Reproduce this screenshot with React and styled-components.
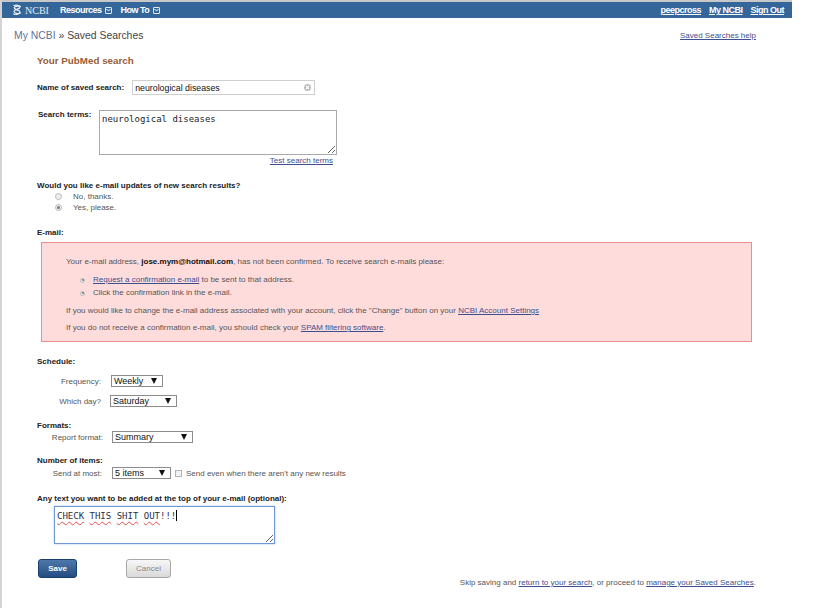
import React from 'react'
import styled, { createGlobalStyle } from 'styled-components'

const GlobalStyle = createGlobalStyle`
  html, body {
    margin: 0;
    padding: 0;
    background: #fff;
  }
  body {
    font-family: "Liberation Sans", Arial, sans-serif;
    font-size: 8px;
    color: #444;
  }
`

const Frame = styled.div`
  width: 790px;
  min-height: 606px;
  border-left: 2px solid #d4d4d4;
  border-top: 2px solid #c8c8c8;
`

const Header = styled.div`
  height: 16px;
  background: #34669a;
  display: flex;
  align-items: center;
  padding: 0 8px 0 10px;
  color: #fff;
`

const Logo = styled.div`
  display: flex;
  align-items: center;
  gap: 3px;
  font-family: "Liberation Serif", "Times New Roman", serif;
  font-size: 10px;
  color: #e6edf5;
`

const NavMenu = styled.div`
  display: flex;
  align-items: center;
  margin-left: 11px;
  gap: 8px;
`

const NavItem = styled.span`
  display: inline-flex;
  align-items: center;
  gap: 4px;
  font-weight: bold;
  font-size: 9px;
  letter-spacing: -0.5px;
  color: #fff;
`

const DropBox = styled.span`
  width: 7px;
  height: 7px;
  box-sizing: border-box;
  border: 1px solid rgba(255, 255, 255, 0.85);
  border-radius: 1px;
  display: inline-flex;
  align-items: center;
  justify-content: center;
`

const UserLinks = styled.div`
  margin-left: auto;
  display: flex;
  gap: 8px;
`

const UserLink = styled.a`
  font-weight: bold;
  font-size: 9px;
  letter-spacing: -0.5px;
  color: #fff;
  text-decoration: underline;
`

const CrumbBar = styled.div`
  display: flex;
  align-items: center;
  justify-content: space-between;
  height: 10px;
  margin-top: 12px;
  padding: 0 36px 0 12px;
`

const Crumbs = styled.div`
  font-size: 10.4px;
  color: #444;
  span { color: #5f7199; }
`

const Link = styled.a`
  color: #3d4f8c;
  text-decoration: underline;
  font-size: ${p => p.$size || 8}px;
`

const Form = styled.div`
  padding: 0 36px 0 35px;
`

const SectionTitle = styled.div`
  margin-top: 15px;
  font-size: 9.8px;
  line-height: 12px;
  font-weight: bold;
  color: #985c36;
`

const Label = styled.div`
  font-size: 8px;
  line-height: 10px;
  font-weight: bold;
  color: #222;
  margin-top: ${p => p.$mt || 0}px;
`

const NameRow = styled.div`
  display: flex;
  align-items: center;
  margin-top: 13px;
  gap: 8px;
`

const InputWrap = styled.div`
  position: relative;
  width: 183px;
  height: 15px;
`

const TextInput = styled.input`
  width: 100%;
  height: 100%;
  box-sizing: border-box;
  border: 1px solid #cfcfcf;
  padding: 0 12px 0 2px;
  font-family: "Liberation Sans", Arial, sans-serif;
  font-size: 8.8px;
  color: #111;
  outline: none;
`

const ClearIcon = styled.span`
  position: absolute;
  right: 4px;
  top: 4px;
  width: 7px;
  height: 7px;
  border-radius: 50%;
  background: #bdbdbd;
  display: flex;
  align-items: center;
  justify-content: center;
`

const TermsRow = styled.div`
  display: flex;
  align-items: flex-start;
  margin-top: 15px;
`

const TermsLabel = styled(Label)`
  width: 61px;
  padding-left: 1px;
`

const TermsColumn = styled.div`
  display: flex;
  flex-direction: column;
  align-items: flex-end;
  gap: 1px;
  a { margin-right: 4px; line-height: 10px; }
`

const TermsArea = styled.textarea`
  width: 238px;
  height: 45px;
  box-sizing: border-box;
  border: 1px solid #a9a9a9;
  padding: 3px 2px;
  font-family: "DejaVu Sans Mono", "Liberation Mono", monospace;
  font-size: 9px;
  line-height: 11px;
  color: #222;
  outline: none;
  margin: 0;
`

const OptionList = styled.div`
  display: flex;
  flex-direction: column;
  padding-left: 18px;
`

const Option = styled.div`
  display: flex;
  align-items: center;
  height: 11px;
  gap: 11px;
  color: #555;
  font-size: 8px;
`

const Dot = styled.span`
  width: ${p => p.$size}px;
  height: ${p => p.$size}px;
  box-sizing: border-box;
  border-radius: 50%;
  border: 1px solid #b8b8b8;
  background: #eeeeee;
  display: inline-flex;
  align-items: center;
  justify-content: center;
  flex-shrink: 0;
  &::after {
    content: '';
    display: ${p => (p.$checked ? 'block' : 'none')};
    width: ${p => p.$inner}px;
    height: ${p => p.$inner}px;
    border-radius: 50%;
    background: #7a7a7a;
  }
`

const Notice = styled.div`
  margin: 4px 0 0 4px;
  width: 711px;
  height: 100px;
  box-sizing: border-box;
  background: #ffdcdc;
  border: 1px solid #f08c8c;
  padding: 14px 24px 0;
  color: #555;
  font-size: 8px;
  line-height: 10px;
`

const NoticeLine = styled.div`
  margin-top: ${p => p.$mt || 0}px;
  b { font-size: 8px; color: #111; }
`

const BulletList = styled.div`
  display: flex;
  flex-direction: column;
  gap: 3px;
  margin-top: 8px;
  padding-left: 14px;
`

const BulletItem = styled.div`
  display: flex;
  align-items: center;
  gap: 8px;
`

const FieldRow = styled.div`
  display: flex;
  align-items: center;
  height: 12px;
  margin-top: ${p => p.$mt || 0}px;
`

const FieldLabel = styled.div`
  width: ${p => p.$w}px;
  margin-right: ${p => p.$gap}px;
  text-align: right;
  color: #555;
  font-size: 8px;
`

const Select = styled.div`
  display: inline-flex;
  align-items: center;
  justify-content: space-between;
  width: ${p => p.$w}px;
  height: 12px;
  box-sizing: border-box;
  border: 1px solid #8c8c8c;
  background: #fff;
  padding: 0 5px 0 2px;
  font-size: 9px;
  color: #111;
`

const Arrow = styled.span`
  width: 0;
  height: 0;
  border-left: 3.5px solid transparent;
  border-right: 3.5px solid transparent;
  border-top: 6px solid #111;
`

const CheckBox = styled.span`
  width: 7px;
  height: 7px;
  box-sizing: border-box;
  border: 1px solid #b3b3b3;
  background: #f2f2f2;
  margin: 0 4px;
`

const CheckLabel = styled.span`
  color: #555;
  font-size: 8px;
`

const MessageBox = styled.div`
  margin: 2px 0 0 17px;
  width: 221px;
  height: 38px;
  box-sizing: border-box;
  border: 1px solid #6f98db;
  box-shadow: 0 0 2px #a9c3ef;
  padding: 3px 2px;
  font-family: "DejaVu Sans Mono", "Liberation Mono", monospace;
  font-size: 9px;
  line-height: 11px;
  color: #27304a;
  overflow: auto;
  resize: both;
`

const Misspelled = styled.span`
  text-decoration: underline wavy #e8504a;
  text-decoration-thickness: 1px;
  text-underline-offset: 2px;
`

const Caret = styled.span`
  display: inline-block;
  width: 1px;
  height: 11px;
  background: #000;
  vertical-align: -2px;
`

const BottomRow = styled.div`
  display: flex;
  align-items: flex-start;
  justify-content: space-between;
  margin-top: 15px;
`

const Buttons = styled.div`
  display: flex;
  gap: 49px;
  padding-left: 1px;
`

const Button = styled.button`
  height: 19px;
  width: ${p => p.$w}px;
  box-sizing: border-box;
  border-radius: 3px;
  font-family: "Liberation Sans", Arial, sans-serif;
  font-size: 8px;
  padding: 0;
  cursor: pointer;
  border: 1px solid ${p => (p.$primary ? '#173f6d' : '#a8a8a8')};
  color: ${p => (p.$primary ? '#fff' : '#8a8a8a')};
  font-weight: ${p => (p.$primary ? 'bold' : 'normal')};
  background: ${p => (p.$primary
    ? 'linear-gradient(#4f78aa, #234d82)'
    : 'linear-gradient(#f7f7f7, #d9d9d9)')};
`

const Footer = styled.div`
  margin-top: 19px;
  font-size: 8px;
  line-height: 10px;
  color: #555;
`

function Helix() {
  return (
    <svg width="10" height="12" viewBox="0 0 10 12" fill="none" stroke="#e6edf5" strokeWidth="1.2" strokeLinecap="round">
      <path d="M2 1.5 C5 0.5 9 2 7.5 4 C6 5.5 2 5.5 2 7.5 C2 9.5 6 10 8.5 9" />
      <path d="M8.5 2.5 C6 1.5 1 2.5 2.5 4.5 C4 6 8 6 8 8 C8 10 4 11 1.5 10" />
    </svg>
  )
}

function Chevron() {
  return (
    <svg width="5" height="4" viewBox="0 0 5 4" fill="none" stroke="#fff" strokeWidth="1">
      <path d="M0.5 1 L2.5 3 L4.5 1" />
    </svg>
  )
}

export default function App() {
  return (
    <>
      <GlobalStyle />
      <Frame>
        <Header>
          <Logo>
            <Helix />
            NCBI
          </Logo>
          <NavMenu>
            <NavItem>Resources <DropBox><Chevron /></DropBox></NavItem>
            <NavItem>How To <DropBox><Chevron /></DropBox></NavItem>
          </NavMenu>
          <UserLinks>
            <UserLink>peepcross</UserLink>
            <UserLink>My NCBI</UserLink>
            <UserLink>Sign Out</UserLink>
          </UserLinks>
        </Header>

        <CrumbBar>
          <Crumbs><span>My NCBI</span> » Saved Searches</Crumbs>
          <Link>Saved Searches help</Link>
        </CrumbBar>

        <Form>
          <SectionTitle>Your PubMed search</SectionTitle>

          <NameRow>
            <Label>Name of saved search:</Label>
            <InputWrap>
              <TextInput defaultValue="neurological diseases" />
              <ClearIcon>
                <svg width="5" height="5" viewBox="0 0 5 5" stroke="#fff" strokeWidth="1.1">
                  <path d="M1 1 L4 4 M4 1 L1 4" />
                </svg>
              </ClearIcon>
            </InputWrap>
          </NameRow>

          <TermsRow>
            <TermsLabel>Search terms:</TermsLabel>
            <TermsColumn>
              <TermsArea defaultValue="neurological diseases" readOnly />
              <Link>Test search terms</Link>
            </TermsColumn>
          </TermsRow>

          <Label $mt={15}>Would you like e-mail updates of new search results?</Label>
          <OptionList>
            <Option><Dot $size={7} $inner={3} />No, thanks.</Option>
            <Option><Dot $size={7} $inner={3} $checked />Yes, please.</Option>
          </OptionList>

          <Label $mt={15}>E-mail:</Label>
          <Notice>
            <NoticeLine>
              Your e-mail address, <b>jose.mym@hotmail.com</b>, has not been confirmed. To receive search e-mails please:
            </NoticeLine>
            <BulletList>
              <BulletItem>
                <Dot $size={5} $inner={2} $checked />
                <span><Link>Request a confirmation e-mail</Link> to be sent to that address.</span>
              </BulletItem>
              <BulletItem>
                <Dot $size={5} $inner={2} $checked />
                <span>Click the confirmation link in the e-mail.</span>
              </BulletItem>
            </BulletList>
            <NoticeLine $mt={8}>
              If you would like to change the e-mail address associated with your account, click the "Change" button on your <Link>NCBI Account Settings</Link>
            </NoticeLine>
            <NoticeLine $mt={7}>
              If you do not receive a confirmation e-mail, you should check your <Link>SPAM filtering software</Link>.
            </NoticeLine>
          </Notice>

          <Label $mt={15}>Schedule:</Label>
          <FieldRow $mt={8}>
            <FieldLabel $w={64} $gap={10}>Frequency:</FieldLabel>
            <Select $w={52}>Weekly<Arrow /></Select>
          </FieldRow>
          <FieldRow $mt={8}>
            <FieldLabel $w={64} $gap={9}>Which day?</FieldLabel>
            <Select $w={67}>Saturday<Arrow /></Select>
          </FieldRow>

          <Label $mt={14}>Formats:</Label>
          <FieldRow>
            <FieldLabel $w={66} $gap={9}>Report format:</FieldLabel>
            <Select $w={81}>Summary<Arrow /></Select>
          </FieldRow>

          <Label $mt={13}>Number of items:</Label>
          <FieldRow $mt={1}>
            <FieldLabel $w={65} $gap={10}>Send at most:</FieldLabel>
            <Select $w={59}>5 items<Arrow /></Select>
            <CheckBox />
            <CheckLabel>Send even when there aren't any new results</CheckLabel>
          </FieldRow>

          <Label $mt={15}>Any text you want to be added at the top of your e-mail (optional):</Label>
          <MessageBox>
            <Misspelled>CHECK</Misspelled> <Misspelled>THIS</Misspelled> <Misspelled>SHIT</Misspelled> <Misspelled>OUT</Misspelled>!!!<Caret />
          </MessageBox>

          <BottomRow>
            <Buttons>
              <Button $primary $w={39}>Save</Button>
              <Button $w={45}>Cancel</Button>
            </Buttons>
            <Footer>
              Skip saving and <Link>return to your search</Link>, or proceed to <Link>manage your Saved Searches</Link>.
            </Footer>
          </BottomRow>
        </Form>
      </Frame>
    </>
  )
}
